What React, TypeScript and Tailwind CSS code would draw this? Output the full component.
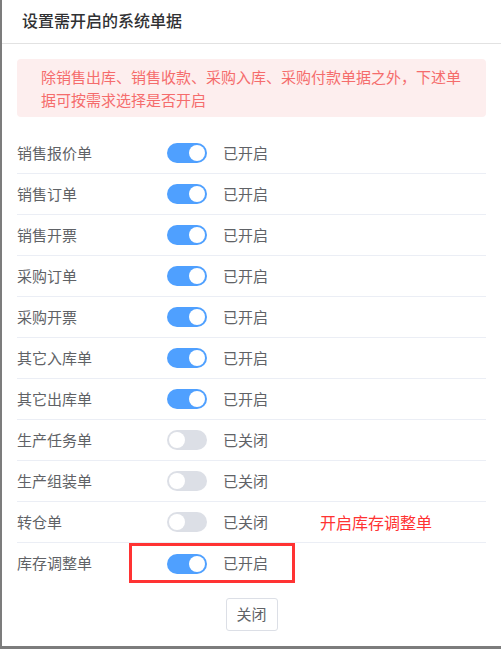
import React from 'react';

const rows = [
  { name: '销售报价单', on: true },
  { name: '销售订单', on: true },
  { name: '销售开票', on: true },
  { name: '采购订单', on: true },
  { name: '采购开票', on: true },
  { name: '其它入库单', on: true },
  { name: '其它出库单', on: true },
  { name: '生产任务单', on: false },
  { name: '生产组装单', on: false },
  { name: '转仓单', on: false, note: '开启库存调整单' },
  { name: '库存调整单', on: true, boxed: true },
];

const Toggle = ({ on }: { on: boolean }) => (
  <span
    className={`flex h-[20px] w-[40px] shrink-0 items-center rounded-full px-[2px] ${
      on ? 'justify-end bg-[#4fa0ff]' : 'justify-start bg-[#dcdfe6]'
    }`}
  >
    <span className="h-[16px] w-[16px] rounded-full bg-white" />
  </span>
);

export default function App() {
  return (
    <div
      className="h-[649px] w-[501px] bg-[#7c7c7c] pb-[3px] pl-[2px]"
      style={{ fontFamily: '"Noto Sans CJK SC", "Noto Sans", sans-serif' }}
    >
      <div className="flex h-full flex-col bg-white">
        <div className="flex h-[44px] shrink-0 items-center border-b border-[#e2e2e2] px-[20px] pb-[3px]">
          <span className="text-[16px] font-medium text-[#303133]">设置需开启的系统单据</span>
        </div>

        <div className="px-[15px] pt-[15px]">
          <div className="rounded-[4px] bg-[#fdeeee] py-[6px] pl-[24px] pr-[20px] text-[15px] leading-[23px] text-[#f56c6c]">
            除销售出库、销售收款、采购入库、采购付款单据之外，下述单据可按需求选择是否开启
          </div>

          <div className="mt-[16px]">
            {rows.map((r, i) => (
              <div
                key={r.name}
                className={`relative flex h-[41px] items-center text-[15px] text-[#606266] ${
                  i < rows.length - 1 ? 'border-b border-[#ebeef5]' : ''
                }`}
              >
                <span className="w-[150px] shrink-0">{r.name}</span>
                <Toggle on={r.on} />
                <span className="ml-[16px] w-[97px] shrink-0">{r.on ? '已开启' : '已关闭'}</span>
                {r.note && <span className="text-[16px] text-[#ff3333]">{r.note}</span>}
                {r.boxed && (
                  <span className="pointer-events-none absolute left-[112px] top-0 h-[40px] w-[166px] border-[3px] border-[#ff3333]" />
                )}
              </div>
            ))}
          </div>

          <div className="mt-[14px] flex justify-center">
            <button className="h-[33px] w-[52px] rounded-[3px] border border-[#dcdfe6] bg-white text-[15px] text-[#606266]">
              关闭
            </button>
          </div>
        </div>
      </div>
    </div>
  );
}
